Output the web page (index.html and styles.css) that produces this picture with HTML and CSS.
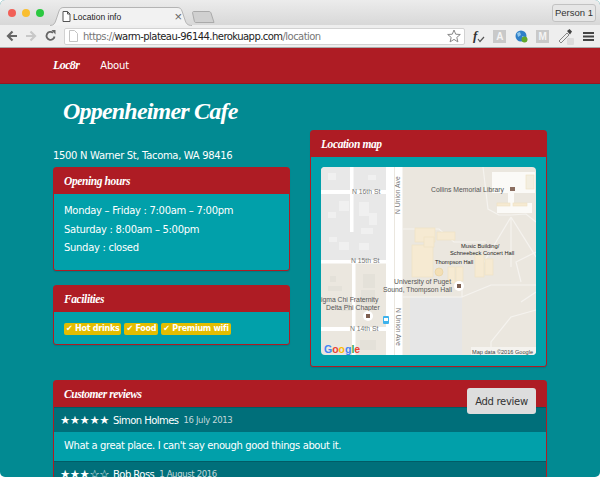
FILE: index.html
```html
<!DOCTYPE html>
<html lang="en">
<head>
<meta charset="utf-8">
<title>Location info</title>
<link rel="stylesheet" href="styles.css">
</head>
<body>
<div class="window">
  <div class="tabstrip">
    <div class="lights"><i class="light red"></i><i class="light amber"></i><i class="light green"></i></div>
    <div class="tab">
      <svg class="tab-shape" width="143" height="19" viewBox="0 0 143 19"><path d="M0 18.500C4 18.500 5 16 6 13L9 4C10 1.500 11 .5 14 .5H127C130 .5 131 1.500 132 4L135 13C136 16 137 18.500 142 18.500" fill="#f2f2f2" stroke="#b4b4b4"/></svg>
      <svg class="tab-doc" width="9" height="11" viewBox="0 0 9 11"><path d="M1 .5H5.500L8 3V10.500H1Z" fill="#fff" stroke="#555"/><path d="M5.500 .5V3H8" fill="none" stroke="#555"/></svg>
      <span class="tab-title">Location info</span>
      <span class="tab-close">×</span>
    </div>
    <svg class="newtab" width="23" height="12" viewBox="0 0 23 12"><path d="M.5 1.500C.5 1 1 .5 2 .5H17C18 .5 18.500 1 19 2L22 11.500H4C3 11.500 2.500 11 2.300 10Z" fill="#d0d0d0" stroke="#aaa"/></svg>
    <div class="person">Person 1</div>
  </div>
  <div class="toolbar">
    <svg class="nav-icons" width="50" height="14" viewBox="0 0 50 14">
      <path d="M11 7H2M6.500 2.500L2 7L6.500 11.500" fill="none" stroke="#666" stroke-width="2.200"/>
      <path d="M20 7H29M24.500 2.500L29 7L24.500 11.500" fill="none" stroke="#c8c8c8" stroke-width="2.200"/>
      <path d="M48.500 7.500A4 4 0 1 1 47 3.700" fill="none" stroke="#666" stroke-width="1.800"/>
      <path d="M45.500 1L49.500 1V5.500Z" fill="#666"/>
    </svg>
    <div class="url">
      <svg width="9" height="12" viewBox="0 0 9 12"><path d="M.5 .5H5.500L8.500 3.500V11.500H.5Z" fill="#fff" stroke="#c4c4c4"/></svg>
      <span class="url-text"><span class="muted">https://</span>warm-plateau-96144.herokuapp.com<span class="muted">/location</span></span>
      <svg class="star" width="14" height="14" viewBox="0 0 14 14"><path d="M7 1L8.700 5.200L13.300 5.500L9.800 8.400L10.900 12.900L7 10.400L3.100 12.900L4.200 8.400L.7 5.500L5.300 5.200Z" fill="#fff" stroke="#888"/></svg>
    </div>
    <div class="ext">
      <svg width="13" height="14" viewBox="0 0 13 14"><text x="1" y="11" class="fx">f</text><path d="M6 10L8 12.500L12 8" fill="none" stroke="#555" stroke-width="1.200"/></svg>
      <span class="ext-box">A</span>
      <svg width="13" height="13" viewBox="0 0 13 13"><circle cx="6" cy="6" r="5.500" fill="#2f7fc8"/><path d="M2 3L5 2L6 5L3 7ZM7 6L10 7L8 10Z" fill="#8fc6ea"/><circle cx="9.500" cy="9.500" r="3" fill="#62a82a"/></svg>
      <span class="ext-box">M</span>
      <svg width="17" height="17" viewBox="0 0 17 17"><path d="M1 13L9 5L11 7L3 15Z" fill="#eee" stroke="#888"/><path d="M9 3L11.500 1L14 3.500L12 6.500Z" fill="#444"/><rect x="9" y="10" width="7" height="7" rx="1" fill="#dcdcdc"/></svg>
      <svg width="11" height="9" viewBox="0 0 11 9"><path d="M0 1H11M0 4.500H11M0 8H11" stroke="#444" stroke-width="1.800"/></svg>
    </div>
  </div>

  <nav class="navbar"><a class="brand">Loc8r</a><a class="nav-link">About</a></nav>

  <main class="page">
    <h1 class="title">Oppenheimer Cafe</h1>
    <div class="columns">
      <div class="col">
        <p class="address">1500 N Warner St, Tacoma, WA 98416</p>
        <section class="panel hours">
          <h2 class="panel-head">Opening hours</h2>
          <div class="panel-body">
            <p class="line">Monday – Friday : 7:00am – 7:00pm</p>
            <p class="line">Saturday : 8:00am – 5:00pm</p>
            <p class="line">Sunday : closed</p>
          </div>
        </section>
        <section class="panel">
          <h2 class="panel-head">Facilities</h2>
          <div class="panel-body tags">
            <span class="tag">✔ Hot drinks</span>
            <span class="tag">✔ Food</span>
            <span class="tag">✔ Premium wifi</span>
          </div>
        </section>
      </div>
      <section class="panel map-panel">
        <h2 class="panel-head">Location map</h2>
        <div class="panel-body map-body">
          <svg class="map" width="215" height="188" viewBox="0 0 215 188">
            <rect width="215" height="188" fill="#ebe7df"/>
            <rect width="66" height="96" fill="#e8e8e8"/>
            <rect x="89" y="130" width="52" height="58" fill="#e6e6e6"/>
            <g fill="#f0f0f0">
              <rect x="7" y="6" width="8" height="7"/><rect x="47" y="8" width="8" height="5"/><rect x="18" y="34" width="10" height="10"/><rect x="38" y="35" width="10" height="14"/><rect x="7" y="45" width="8" height="6"/><rect x="48" y="46" width="8" height="12"/><rect x="40" y="61" width="12" height="6"/><rect x="8" y="70" width="8" height="5"/><rect x="18" y="75" width="10" height="8"/><rect x="38" y="76" width="10" height="7"/>
            </g>
            <g fill="#e4e1d9">
              <rect x="42" y="107" width="12" height="14"/><rect x="9" y="109" width="6" height="6"/><rect x="7" y="119" width="14" height="5"/><rect x="40" y="123" width="14" height="14"/><rect x="20" y="136" width="12" height="8"/><rect x="39" y="173" width="16" height="10"/>
            </g>
            <g fill="#fff">
              <rect x="0" y="23" width="66" height="4"/><rect x="0" y="93" width="66" height="3.500"/><rect x="0" y="160" width="66" height="4"/>
              <rect x="29" y="0" width="3.500" height="65"/><rect x="31" y="96" width="3.500" height="92"/>
              <rect x="65" y="0" width="8" height="188"/><rect x="74" y="0" width="7.500" height="188"/>
            </g>
            <g fill="none" stroke="#f5f3ef" stroke-width="1.200">
              <path d="M81 62H118L133 75H165M81 130H141L170 118H215M141 130V115"/>
              <path d="M162 0L167 42L178 48H190L205 47L215 55M190 50L160 100M190 50V100M190 50L215 90"/>
              <path d="M215 85L195 95L200 115M215 143L190 150L170 175V188M200 135L215 125"/>
            </g>
            <g fill="#fbfaf7">
              <rect x="171" y="5" width="43" height="21"/><rect x="187" y="26" width="6" height="10"/><rect x="176" y="36" width="35" height="10"/>
            </g>
            <g fill="#f6ead2" stroke="#efe0c1" stroke-width=".6">
              <rect x="176" y="36" width="13" height="3"/><rect x="192" y="36" width="14" height="3"/>
              <rect x="205" y="8" width="8" height="14" fill="#f3eee0"/>
              <rect x="94" y="61" width="20" height="14"/><rect x="116" y="65" width="18" height="8"/>
              <rect x="91" y="78" width="21" height="32"/><rect x="103" y="70" width="10" height="10"/>
              <rect x="127" y="100" width="7" height="16"/><rect x="135" y="100" width="7" height="14"/>
              <rect x="154" y="88" width="9" height="22"/><rect x="164" y="92" width="8" height="16"/>
            </g>
            <circle cx="118" cy="105" r="4" fill="#f3dfb5" stroke="#e6cf9a" stroke-width=".6"/>
            <g class="m-label">
              <text x="110" y="25">Collins Memorial Library</text>
              <text x="31" y="27" class="road">N 16th St</text>
              <text x="30" y="96" class="road">N 15th St</text>
              <text x="29" y="164" class="road">N 14th St</text>
              <text transform="translate(79 47) rotate(-90)" class="road">N Union Ave</text>
              <text transform="translate(75 141) rotate(90)" class="road">N Union Ave</text>
              <text x="73" y="117">University of Puget</text>
              <text x="62" y="124.500">Sound, Thompson Hall</text>
              <text x="0" y="135">igma Chi Fraternity</text>
              <text x="5" y="142.500">Delta Phi Chapter</text>
            </g>
            <g class="m-small">
              <text x="140" y="81">Music Building/</text>
              <text x="129" y="88">Schneebeck Concert Hall</text>
              <text x="114" y="97">Thompson Hall</text>
            </g>
            <rect x="189" y="20" width="5" height="4" fill="#8b6e60"/>
            <circle cx="138" cy="119" r="5" fill="#fff"/><rect x="136" y="117" width="4" height="4" fill="#7d5f50"/>
            <circle cx="47" cy="149" r="5" fill="#fff"/><rect x="45" y="147" width="4" height="4" fill="#7d5f50"/>
            <rect x="62" y="149" width="6" height="8" rx="1" fill="#3db2ec"/><rect x="63" y="151" width="4" height="3" fill="#fff"/>
            <rect x="150" y="180" width="65" height="8" fill="#f5f3ef"/>
            <text x="151" y="187" class="m-copy">Map data ©2016 Google</text>
            <text x="3" y="186" class="m-google"><tspan fill="#4285f4">G</tspan><tspan fill="#ea4335">o</tspan><tspan fill="#fbbc05">o</tspan><tspan fill="#4285f4">g</tspan><tspan fill="#34a853">l</tspan><tspan fill="#ea4335">e</tspan></text>
          </svg>
        </div>
      </section>
    </div>
    <section class="panel reviews">
      <h2 class="panel-head">Customer reviews</h2>
      <button class="add-review">Add review</button>
      <div class="review-head"><span class="stars">★★★★★</span><span class="author">Simon Holmes</span><small class="date">16 July 2013</small></div>
      <p class="review-text">What a great place. I can't say enough good things about it.</p>
      <div class="review-head"><span class="stars">★★★☆☆</span><span class="author">Bob Ross</span><small class="date">1 August 2016</small></div>
    </section>
  </main>
</div>
</body>
</html>
```

FILE: styles.css
```css
* { box-sizing: border-box; }
html, body { margin: 0; height: 100%; background: #fff; overflow: hidden; }
body { font-family: "DejaVu Sans", sans-serif; font-size: 10px; color: #fff; letter-spacing: -.35px; }
p, h1, h2 { margin: 0; }

.window { height: 477px; overflow: hidden; border-radius: 5px; background: #028a92; }

.tabstrip { position: relative; height: 25px; display: flex; align-items: flex-start; letter-spacing: 0; background: linear-gradient(#ececec, #d8d8d8); }
.lights { display: flex; gap: 6px; padding: 9px 0 0 8px; }
.light { width: 8px; height: 8px; border-radius: 50%; }
.light.red { background: #f15f57; }
.light.amber { background: #f9be2f; }
.light.green { background: #2bc840; }
.tab { position: relative; width: 143px; height: 19px; margin: 7px 0 0 6px; display: flex; align-items: center; padding-left: 12px; }
.tab-shape { position: absolute; left: 0; top: 0; }
.tab-doc { position: relative; }
.tab-title { position: relative; margin-left: 2px; font: 8.500px "Liberation Sans", sans-serif; color: #222; }
.tab-close { position: absolute; right: 11px; top: 2px; font: 13px "Liberation Sans", sans-serif; color: #666; }
.newtab { margin: 11px 0 0 -1px; }
.person { margin: 4px 4px 0 auto; width: 44px; height: 18px; border: 1px solid #c2c2c2; border-radius: 3px; background: #e6e6e6; font: 9.500px/16px "Liberation Sans", sans-serif; text-align: center; color: #333; }

.toolbar { height: 23px; display: flex; align-items: center; padding: 0 6px; letter-spacing: 0; background: #eee; border-bottom: 1px solid #aaa; }
.nav-icons { flex: none; }
.url { flex: none; width: 401px; height: 17px; margin-left: 8px; padding: 0 3px 0 4px; display: flex; align-items: center; background: #fff; border: 1px solid #d2d2d2; border-radius: 2px; }
.url-text { margin-left: 5px; font: 10px "DejaVu Sans", sans-serif; letter-spacing: -.55px; color: #222; white-space: nowrap; }
.muted { color: #777; }
.star { margin-left: auto; }
.ext { flex: 1; display: flex; align-items: center; justify-content: space-between; padding-left: 7px; }
.ext-box { width: 13px; height: 13px; background: #c9c9c9; color: #f4f4f4; font: bold 10px/13px "Liberation Sans", sans-serif; text-align: center; }
.fx { font: italic bold 13px "Liberation Serif", serif; fill: #333; }

.navbar { height: 36px; display: flex; align-items: center; gap: 21px; padding-left: 53px; background: #ae1c24; border-bottom: 1px solid #941820; }
.brand { font: italic bold 12px "Liberation Serif", serif; letter-spacing: -.6px; }
.nav-link { font-size: 10px; letter-spacing: -.2px; }

.page { padding: 0 53px; }
.title { height: 46px; padding: 12px 0 0 10px; font: italic bold 24px/30px "Liberation Serif", serif; letter-spacing: -.8px; }
.columns { display: grid; grid-template-columns: 237px 237px; gap: 20px; }
.address { height: 37px; padding-top: 19px; line-height: 13px; font-size: 10px; letter-spacing: -.33px; }

.panel { border: 1px solid #ae1c24; border-radius: 3px; background: #01a0aa; box-shadow: 0 1px 1px rgba(0,0,0,.1); }
.hours { height: 104px; margin-bottom: 14px; }
.panel-head { height: 26px; padding-left: 10px; background: #ae1c24; font: italic bold 11.500px/26px "Liberation Serif", serif; letter-spacing: -.4px; }
.panel-body { padding: 8px 10px; }
.line { height: 18.500px; line-height: 18px; font-size: 10px; letter-spacing: -.3px; }
.tags { display: flex; gap: 3px; height: 32px; padding: 11px 10px 0; }
.tag { height: 12px; padding: 0 2px; background: #e3bd00; border-radius: 2px; font: bold 8px/12px "DejaVu Sans", sans-serif; letter-spacing: -.25px; white-space: nowrap; }

.map-panel { height: 237px; }
.map-body { padding: 10px; }
.map { display: block; border-radius: 4px; }
.m-label text { font: 6.800px "Liberation Sans", sans-serif; fill: #555; letter-spacing: 0; }
.m-label .road { fill: #777; }
.m-small text { font: 5.700px "Liberation Sans", sans-serif; fill: #222; letter-spacing: 0; }
.m-copy { font: 5.600px "Liberation Sans", sans-serif; fill: #444; letter-spacing: 0; }
.m-google { font: bold 10.500px "Liberation Sans", sans-serif; letter-spacing: 0; }

.reviews { position: relative; margin-top: 13px; border-radius: 3px 3px 0 0; }
.add-review { position: absolute; right: 10px; top: 7px; width: 69px; height: 26px; padding: 0; border: 0; border-radius: 3px; background: #ddd; color: #333; font: 10px "DejaVu Sans", sans-serif; letter-spacing: -.3px; }
.review-head { height: 25px; padding-left: 6px; display: flex; align-items: center; background: #006f7a; border-top: 1px solid #015c66; }
.stars { font-size: 11.500px; letter-spacing: -.5px; }
.author { margin-left: 4px; font-size: 10px; letter-spacing: -.55px; }
.date { margin-left: 5px; font-size: 8.500px; letter-spacing: -.35px; color: #c5d8da; }
.review-text { height: 29px; padding-left: 10px; line-height: 28px; font-size: 10px; letter-spacing: -.4px; background: #01a0aa; }
```
